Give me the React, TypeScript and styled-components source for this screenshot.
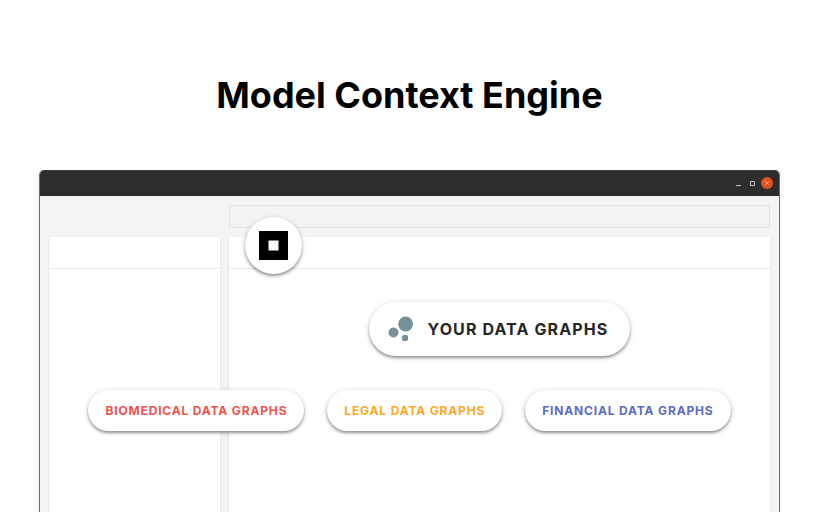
import React from "react";
import styled, { createGlobalStyle } from "styled-components";

const GlobalStyle = createGlobalStyle`
  *, *::before, *::after { box-sizing: border-box; }
  body {
    margin: 0;
    background: #ffffff;
    font-family: Inter, "Liberation Sans", sans-serif;
    color: #000000;
  }
`;

const Page = styled.main`
  display: flex;
  flex-direction: column;
  height: 100vh;
  overflow: hidden;
  padding: 71px 39px 0;
`;

const Title = styled.h1`
  margin: 0 0 51px;
  font-size: 36px;
  line-height: 48px;
  font-weight: 700;
  font-optical-sizing: none;
  text-align: center;
`;

const Window = styled.section`
  position: relative;
  flex: 1;
  display: flex;
  flex-direction: column;
  border: 1px solid #68696a;
  border-top-color: #3c4043;
  border-bottom: 0;
  border-radius: 5px 5px 0 0;
  background: #f4f4f4;
  box-shadow: 0 1px 6px rgba(0, 0, 0, 0.06);
`;

const TitleBar = styled.header`
  display: flex;
  align-items: center;
  justify-content: flex-end;
  gap: 3px;
  height: 25px;
  padding: 0 6px 1px 0;
  border-radius: 4px 4px 0 0;
  background: #2c2c2c;
`;

const WindowButton = styled.button<{ $close?: boolean }>`
  display: flex;
  align-items: center;
  justify-content: center;
  width: ${(p) => (p.$close ? 12 : 11)}px;
  height: 12px;
  padding: 0;
  border: 0;
  border-radius: 50%;
  color: ${(p) => (p.$close ? "#ff9a80" : "#c4c4c4")};
  background: ${(p) => (p.$close ? "#e2521f" : "transparent")};
`;

const Workspace = styled.div`
  flex: 1;
  display: grid;
  grid-template-columns: 171px 1fr;
  grid-template-rows: 23px 1fr;
  gap: 9px;
  padding: 9px 9px 0;
`;

const Search = styled.input`
  grid-column: 2;
  width: 100%;
  height: 23px;
  padding: 0 8px;
  border: 1px solid #e2e2e2;
  background: #f3f3f3;
  font: inherit;
  font-size: 12px;
`;

const Pane = styled.div`
  background: #ffffff;
  box-shadow: 0 1px 2px rgba(0, 0, 0, 0.14);
`;

const PaneHeader = styled.div`
  height: 32px;
  border-bottom: 1px solid #ebebeb;
`;

const PaneContent = styled.div`
  display: flex;
  justify-content: center;
  padding-top: 33px;
`;

const raised = `
  background: #ffffff;
  box-shadow: 0 2px 3px rgba(0, 0, 0, 0.36), 0 1px 6px rgba(0, 0, 0, 0.14);
`;

const Badge = styled.div`
  ${raised}
  position: absolute;
  top: 46px;
  left: 205px;
  display: flex;
  align-items: center;
  justify-content: center;
  width: 57px;
  height: 57px;
  border-radius: 50%;
`;

const Pill = styled.button<{ $color: string; $large?: boolean }>`
  ${raised}
  display: flex;
  align-items: center;
  gap: 14px;
  height: ${(p) => (p.$large ? 54 : 41)}px;
  padding: 0 ${(p) => (p.$large ? 22 : 17)}px 0 ${(p) => (p.$large ? 19 : 17)}px;
  border: 0;
  border-radius: 27px;
  color: ${(p) => p.$color};
  font-family: inherit;
  font-size: ${(p) => (p.$large ? 16 : 12)}px;
  font-weight: 700;
  letter-spacing: 0.07em;
  white-space: nowrap;
`;

const PillRow = styled.nav`
  position: absolute;
  top: 219px;
  left: 0;
  right: 0;
  display: flex;
  justify-content: center;
  gap: 23px;
`;

const graphs = [
  { label: "BIOMEDICAL DATA GRAPHS", color: "#ef5350" },
  { label: "LEGAL DATA GRAPHS", color: "#ffa726" },
  { label: "FINANCIAL DATA GRAPHS", color: "#5c6bc0" },
];

export default function App() {
  return (
    <>
      <GlobalStyle />
      <Page>
        <Title>Model Context Engine</Title>
        <Window>
          <TitleBar>
            <WindowButton aria-label="Minimize">
              <svg width="11" height="12" aria-hidden="true">
                <path d="M3 8.5h5" stroke="currentColor" />
              </svg>
            </WindowButton>
            <WindowButton aria-label="Maximize">
              <svg width="11" height="12" aria-hidden="true">
                <path d="M3.5 4.5h4v4h-4z" fill="none" stroke="currentColor" />
              </svg>
            </WindowButton>
            <WindowButton $close aria-label="Close">
              <svg width="12" height="12" aria-hidden="true">
                <path d="M4 4l4 4M8 4l-4 4" stroke="currentColor" />
              </svg>
            </WindowButton>
          </TitleBar>
          <Workspace>
            <Search aria-label="Search" />
            <Pane>
              <PaneHeader />
            </Pane>
            <Pane>
              <PaneHeader />
              <PaneContent>
                <Pill $large $color="#262626">
                  <svg width="26" height="26" aria-hidden="true" fill="#78909c">
                    <circle cx="17.6" cy="8" r="7.4" />
                    <circle cx="5.5" cy="16.5" r="5" />
                    <circle cx="17" cy="22" r="3.2" />
                  </svg>
                  YOUR DATA GRAPHS
                </Pill>
              </PaneContent>
            </Pane>
          </Workspace>
          <Badge>
            <svg width="29" height="29" role="img" aria-label="Logo">
              <path d="M0 0h29v29H0zM9.5 9.5v10h10v-10z" fillRule="evenodd" />
            </svg>
          </Badge>
          <PillRow aria-label="Data graphs">
            {graphs.map((g) => (
              <Pill key={g.label} $color={g.color}>
                {g.label}
              </Pill>
            ))}
          </PillRow>
        </Window>
      </Page>
    </>
  );
}
